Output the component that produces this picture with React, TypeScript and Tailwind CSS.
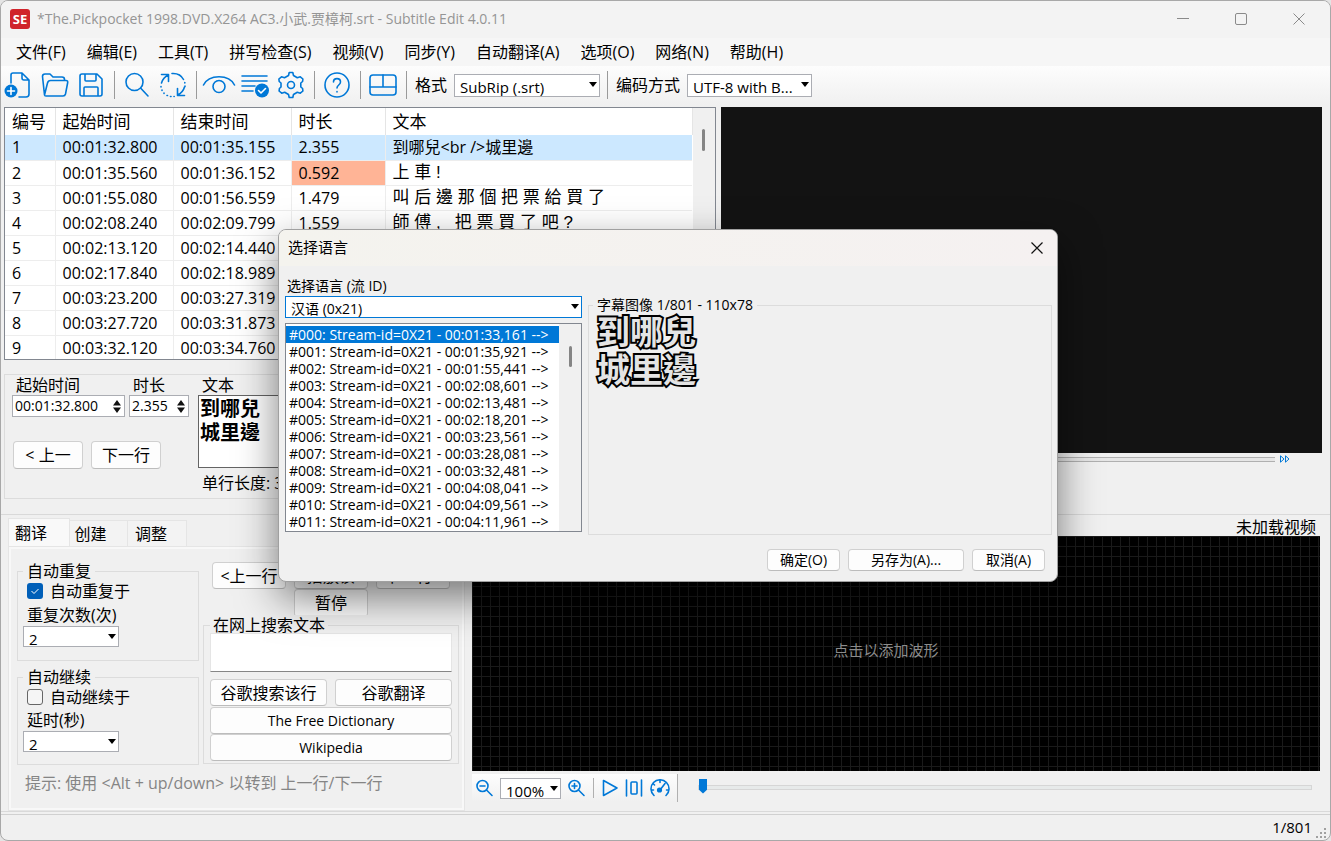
import type { ReactNode } from "react";

const menus = [
  "文件(F)",
  "编辑(E)",
  "工具(T)",
  "拼写检查(S)",
  "视频(V)",
  "同步(Y)",
  "自动翻译(A)",
  "选项(O)",
  "网络(N)",
  "帮助(H)",
];

const lines = [
  { start: "00:01:32.800", end: "00:01:35.155", duration: "2.355", text: "到哪兒<br />城里邊" },
  { start: "00:01:35.560", end: "00:01:36.152", duration: "0.592", text: "上 車 !" },
  { start: "00:01:55.080", end: "00:01:56.559", duration: "1.479", text: "叫 后 邊 那 個 把 票 給 買 了" },
  { start: "00:02:08.240", end: "00:02:09.799", duration: "1.559", text: "師 傅 ,   把 票 買 了 吧 ?" },
  { start: "00:02:13.120", end: "00:02:14.440", duration: "1.320", text: "" },
  { start: "00:02:17.840", end: "00:02:18.989", duration: "1.149", text: "" },
  { start: "00:03:23.200", end: "00:03:27.319", duration: "4.119", text: "" },
  { start: "00:03:27.720", end: "00:03:31.873", duration: "4.153", text: "" },
  { start: "00:03:32.120", end: "00:03:34.760", duration: "2.640", text: "" },
];

const streams = [
  "00:01:33,161",
  "00:01:35,921",
  "00:01:55,441",
  "00:02:08,601",
  "00:02:13,481",
  "00:02:18,201",
  "00:03:23,561",
  "00:03:28,081",
  "00:03:32,481",
  "00:04:08,041",
  "00:04:09,561",
  "00:04:11,961",
];

function Icon({ children, w = 28, h = 28 }: { children: ReactNode; w?: number; h?: number }) {
  return (
    <svg
      width={w}
      height={h}
      viewBox={`0 0 ${w} ${h}`}
      fill="none"
      stroke="#0078d7"
      strokeWidth="1.6"
      strokeLinecap="round"
      strokeLinejoin="round"
      className="shrink-0"
    >
      {children}
    </svg>
  );
}

function ToolButton({ label, children }: { label: string; children: ReactNode }) {
  return (
    <button aria-label={label} className="flex w-9 shrink-0 items-center justify-center">
      {children}
    </button>
  );
}

function Separator() {
  return (
    <div className="flex w-2.5 shrink-0 justify-center">
      <div className="h-7 w-px bg-[#9a9a9a]" />
    </div>
  );
}

type ComboProps = {
  id: string;
  value: string;
  label?: string;
  className?: string;
  selectClass?: string;
};

function Combo({ id, value, label, className = "", selectClass = "border-[#abadb3] text-base" }: ComboProps) {
  return (
    <div className={`relative shrink-0 ${className}`}>
      <select
        id={id}
        aria-label={label}
        className={`block w-full appearance-none border bg-white pl-[5px] pt-0.5 ${selectClass}`}
      >
        <option>{value}</option>
      </select>
      <svg width="8" height="5" viewBox="0 0 8 5" className="pointer-events-none absolute right-[3px] top-2">
        <path d="M0 0h8L4 5z" fill="#000" />
      </svg>
    </div>
  );
}

function Spinner({ id, value, className }: { id: string; value: string; className: string }) {
  return (
    <div className={`flex h-[22px] items-center border border-[#abadb3] bg-white ${className}`}>
      <input id={id} defaultValue={value} className="w-full min-w-0 pl-0.5 text-sm leading-5 outline-none" />
      <svg width="8" height="13" viewBox="0 0 8 13" className="mr-[3px] shrink-0">
        <path d="M0 5.5 4 0l4 5.5zM0 7.5 4 13l4-5.5z" fill="#111" />
      </svg>
    </div>
  );
}

function Button({ children, className = "" }: { children: ReactNode; className?: string }) {
  return (
    <button
      className={`flex items-center justify-center whitespace-nowrap rounded border border-[#d0d0d0] border-b-[#bcbcbc] bg-[#fdfdfd] ${className}`}
    >
      {children}
    </button>
  );
}

function TitleBar() {
  return (
    <header className="flex h-[37px] items-center bg-[#f3f3f3] pb-0.5 pl-[9px] pr-0.5">
      <div className="flex h-5 w-5 items-center justify-center rounded-[3px] bg-[#d0242b] text-[13px] font-bold leading-5 text-white">
        SE
      </div>
      <h1 className="ml-[7px] flex-1 text-sm text-[#959595]">
        *The.Pickpocket 1998.DVD.X264 AC3.小武.贾樟柯.srt - Subtitle Edit 4.0.11
      </h1>
      <button aria-label="最小化" className="flex w-[58px] justify-center">
        <svg width="12" height="12" stroke="#8a8a8a">
          <path d="M0 5.5h12" />
        </svg>
      </button>
      <button aria-label="最大化" className="flex w-[58px] justify-center">
        <svg width="12" height="12" stroke="#8a8a8a" fill="none">
          <rect x=".5" y=".5" width="11" height="11" rx="1.5" />
        </svg>
      </button>
      <button aria-label="关闭" className="flex w-[58px] justify-center">
        <svg width="12" height="12" stroke="#8a8a8a">
          <path d="M.5.5l11 11M11.5.5l-11 11" />
        </svg>
      </button>
    </header>
  );
}

function Toolbar() {
  return (
    <div className="flex h-[39px] items-center bg-linear-to-b from-[#fdfdfd] to-[#f0f0f0] pb-px">
      <ToolButton label="新建">
        <Icon w={32}>
          <path d="M8 12V4a2 2 0 0 1 2-2h9l7 7v14a3 3 0 0 1-3 3h-7M19 2v5a2 2 0 0 0 2 2h5" />
          <circle cx="8" cy="20" r="6.5" fill="#0078d7" stroke="none" />
          <path d="M8 16.500v7M4.500 20h7" stroke="#fff" />
        </Icon>
      </ToolButton>
      <ToolButton label="打开">
        <Icon>
          <path d="M3.500 24 1.500 5.500Q1.500 3 4 3h5l3 3h9q2.500 0 2.500 2.500v1M3.500 24l3-12q.6-2.500 3-2.500H25q2 0 1.700 2L24.500 23q-.5 2-2.500 2H5q-1.500 0-1.500-1z" />
        </Icon>
      </ToolButton>
      <ToolButton label="保存">
        <Icon>
          <path d="M5 3h15l5 5v15a2 2 0 0 1-2 2H5a2 2 0 0 1-2-2V5a2 2 0 0 1 2-2zM8 3v6a1 1 0 0 0 1 1h9a1 1 0 0 0 1-1V3M7 25v-8a1 1 0 0 1 1-1h12a1 1 0 0 1 1 1v8" />
        </Icon>
      </ToolButton>
      <Separator />
      <ToolButton label="查找">
        <Icon>
          <circle cx="11.500" cy="11" r="8.500" />
          <path d="m18 17.500 7 7.500" />
        </Icon>
      </ToolButton>
      <ToolButton label="替换">
        <Icon>
          <path d="M2.500 3.500h7v7M9.500 4Q4 6.500 2.500 12M25.500 24.500h-7v-7M18.500 24q5.500-2.500 7-8" />
          <path d="M13 2.500c6-.4 9.500 2 11.500 6" />
          <path d="M25.800 11.500v.5M26 15v.5M2 15.500v.5M3 19v.5M5 22v.5M8 24.500h.5M11.500 25.500h.5M15 25.500h.2" />
        </Icon>
      </ToolButton>
      <Separator />
      <ToolButton label="可视同步">
        <Icon w={34}>
          <path d="M1.500 14C7 3 27 3 32.500 14" />
          <circle cx="17" cy="15.500" r="6" />
        </Icon>
      </ToolButton>
      <ToolButton label="拼写检查">
        <Icon>
          <path d="M1 5h25M1 10h25M1 15h13M1 20h11" />
          <circle cx="21" cy="19.500" r="7" fill="#0078d7" stroke="none" />
          <path d="m17.500 19.500 2.500 2.500 4.500-4.500" stroke="#fff" />
        </Icon>
      </ToolButton>
      <ToolButton label="设置">
        <Icon>
          <path d="M11.500 4.500 12.200 1.500h3.600l.7 3 3.800 2.200 3-.9 2.600 2.200-.3 2.500-1.800 1.500v4l1.800 1.500.3 2.500-2.600 2.200-3-.9-3.800 2.200-.7 3h-3.600l-.7-3-3.800-2.200-3 .9-2.600-2.200.3-2.500L4 16v-4L2.200 10.500l-.3-2.500 2.600-2.200 3 .9z" />
          <circle cx="14" cy="14" r="3.500" />
        </Icon>
      </ToolButton>
      <Separator />
      <ToolButton label="帮助">
        <Icon>
          <circle cx="14" cy="14" r="12" />
          <path d="M10.500 11c0-4.500 7-4.500 7 0 0 3-3.500 3-3.500 6M14 20.500v.5" />
        </Icon>
      </ToolButton>
      <Separator />
      <ToolButton label="布局">
        <Icon>
          <rect x="1" y="4" width="26" height="20" rx="3" />
          <path d="M1 16h26M14 4v12" />
        </Icon>
      </ToolButton>
      <Separator />
      <label htmlFor="format" className="whitespace-nowrap pl-1 pr-[7px]">
        格式
      </label>
      <Combo
        id="format"
        value="SubRip (.srt)"
        className="mr-0.5 w-[146px]"
        selectClass="h-[23px] border-[#abadb3] text-[15px] leading-5"
      />
      <Separator />
      <label htmlFor="encoding" className="whitespace-nowrap pl-1 pr-[7px]">
        编码方式
      </label>
      <Combo
        id="encoding"
        value="UTF-8 with B..."
        className="w-[125px]"
        selectClass="h-[23px] border-[#abadb3] text-[15px] leading-5"
      />
    </div>
  );
}

function SubtitleList() {
  return (
    <div className="flex h-[253px] overflow-hidden border border-[#828790] bg-white">
      <div className="min-w-0 flex-1">
        <table className="w-full table-fixed border-collapse text-left">
          <thead>
            <tr className="h-[27px] text-[17px] leading-6">
              <th className="w-[50px] border-r border-[#e5e5e5] p-0 pl-[7px] font-normal">编号</th>
              <th className="w-[118px] border-r border-[#e5e5e5] p-0 pl-[7px] font-normal">起始时间</th>
              <th className="w-[118px] border-r border-[#e5e5e5] p-0 pl-[7px] font-normal">结束时间</th>
              <th className="w-[94px] border-r border-[#e5e5e5] p-0 pl-[7px] font-normal">时长</th>
              <th className="border-r border-[#e5e5e5] p-0 pl-[7px] font-normal">文本</th>
            </tr>
          </thead>
          <tbody>
            {lines.map((line, i) => (
              <tr
                key={line.start}
                className={`h-[25px] border-b border-[#ededed] leading-6 ${i === 0 ? "bg-[#cce8ff]" : ""}`}
              >
                <td className="border-r border-[#ededed] p-0 pl-[7px]">{i + 1}</td>
                <td className="border-r border-[#ededed] p-0 pl-[7px]">{line.start}</td>
                <td className="border-r border-[#ededed] p-0 pl-[7px]">{line.end}</td>
                <td className={`border-r border-[#ededed] p-0 pl-[7px] ${i === 1 ? "bg-[#ffb496]" : ""}`}>
                  {line.duration}
                </td>
                <td
                  className={`whitespace-pre p-0 pl-[7px] ${
                    i === 0 ? "" : "font-['Liberation_Sans','Noto_Sans_CJK_TC',sans-serif] text-[17px]"
                  }`}
                >
                  {line.text}
                </td>
              </tr>
            ))}
          </tbody>
        </table>
      </div>
      <div className="flex w-[22px] justify-center bg-[#f0f0f0] pt-[21px]">
        <div className="h-[22px] w-[3px] rounded bg-[#858585]" />
      </div>
    </div>
  );
}

function EditPanel() {
  return (
    <section className="mt-3.5 flex h-[125px] gap-2 border border-[#dcdcdc] pl-[7px]">
      <div className="w-[178px] shrink-0">
        <div className="flex gap-1">
          <div className="w-[113px]">
            <label htmlFor="start" className="block pl-1 leading-5">
              起始时间
            </label>
            <Spinner id="start" value="00:01:32.800" className="w-full" />
          </div>
          <div className="w-[60px]">
            <label htmlFor="duration" className="block pl-1 leading-5">
              时长
            </label>
            <Spinner id="duration" value="2.355" className="w-full" />
          </div>
        </div>
        <div className="mt-6 flex gap-2 pl-px">
          <Button className="h-7 w-[70px]">&lt; 上一</Button>
          <Button className="h-7 w-[70px]">下一行</Button>
        </div>
      </div>
      <div className="min-w-0 flex-1 pr-2">
        <label htmlFor="text" className="block pl-1 leading-5">
          文本
        </label>
        <textarea
          id="text"
          defaultValue={"到哪兒\n城里邊"}
          className="block h-[73px] w-full resize-none border border-[#646464] bg-white px-px font-['Noto_Sans_CJK_TC',sans-serif] text-[20px] font-bold leading-6"
        />
        <p className="mt-[3px] pl-1 leading-6">单行长度: 3/3</p>
      </div>
    </section>
  );
}

function VideoPane() {
  return (
    <section>
      <div className="h-[346px] bg-[#131313]" />
      <div className="mt-0.5 flex items-center gap-[5px] pr-8">
        <div className="h-[5px] flex-1 border-y border-[#b0b0b0] bg-[#e6e6e6]" />
        <svg width="10" height="8" viewBox="0 0 10 8" fill="none" stroke="#0078d7">
          <path d="M.5.8v6.400L4 4zM5.500.8v6.400L9 4z" />
        </svg>
      </div>
    </section>
  );
}

function TranslateTab() {
  return (
    <section className="flex w-[457px] shrink-0 flex-col pt-[3px]">
      <div role="tablist" className="flex items-end">
        <button role="tab" className="h-7 w-[62px] border border-b-0 border-[#e5e5e5] bg-[#f9f9f9] pr-4">
          翻译
        </button>
        <button role="tab" className="h-[26px] w-[58px] border border-b-0 border-l-0 border-[#e5e5e5] bg-[#f3f3f3] pr-4">
          创建
        </button>
        <button role="tab" className="h-[26px] w-[59px] border border-b-0 border-l-0 border-[#e5e5e5] bg-[#f3f3f3] pr-3">
          调整
        </button>
      </div>
      <div className="flex flex-1 flex-col border-[3px] border-[#f8f8f8] outline -outline-offset-1 outline-[#e5e5e5]">
        <div className="flex gap-1 pl-1.5">
          <div className="w-[182px]">
            <fieldset className="mt-3 h-[100px] border border-[#dcdcdc] px-[5px]">
              <legend className="px-1 leading-5">自动重复</legend>
              <div className="flex items-center gap-[7px] pl-1 leading-5">
                <span className="relative flex">
                  <input
                    id="repeat"
                    type="checkbox"
                    defaultChecked
                    className="h-4 w-4 appearance-none rounded-[3px] bg-[#005fb8]"
                  />
                  <svg
                    width="16"
                    height="16"
                    fill="none"
                    stroke="#fff"
                    className="pointer-events-none absolute inset-0"
                  >
                    <path d="m4.500 8 2.500 2.500 4.500-4.500" />
                  </svg>
                </span>
                <label htmlFor="repeat">自动重复于</label>
              </div>
              <label htmlFor="times" className="mt-[3px] block pl-1 leading-[22px]">
                重复次数(次)
              </label>
              <Combo
                id="times"
                value="2"
                className="w-24"
                selectClass="h-[21px] border-[#abadb3] text-[15px] leading-5"
              />
            </fieldset>
            <fieldset className="mt-1.5 h-[98px] border border-[#dcdcdc] px-[5px]">
              <legend className="px-1 leading-5">自动继续</legend>
              <div className="flex items-center gap-[7px] pl-1 leading-5">
                <input
                  id="continue"
                  type="checkbox"
                  className="h-4 w-4 appearance-none rounded-[3px] border border-[#666] bg-[#f5f5f5]"
                />
                <label htmlFor="continue">自动继续于</label>
              </div>
              <label htmlFor="delay" className="mt-0.5 block pl-1 leading-[22px]">
                延时(秒)
              </label>
              <Combo
                id="delay"
                value="2"
                className="w-24"
                selectClass="h-[21px] border-[#abadb3] text-[15px] leading-5"
              />
            </fieldset>
          </div>
          <div className="w-[256px]">
            <div className="mt-[13px] grid h-[53px] grid-cols-[74px_74px_74px] gap-x-2 overflow-hidden pl-[9px]">
              <Button className="h-[27px]">&lt;上一行</Button>
              <Button className="h-[27px]">播放该</Button>
              <Button className="h-[27px]">下一行&gt;</Button>
              <Button className="col-start-2 h-7">暂停</Button>
            </div>
            <fieldset className="h-[149px] border border-[#dcdcdc] px-1.5">
              <legend className="px-[3px] leading-5">
                <label htmlFor="query">在网上搜索文本</label>
              </legend>
              <textarea
                id="query"
                className="-mt-0.5 block h-[39px] w-full resize-none border border-[#e5e5e5] border-b-[#868686] bg-white"
              />
              <div className="mt-[7px] grid grid-cols-2 gap-x-2">
                <Button className="h-[27px]">谷歌搜索该行</Button>
                <Button className="h-[27px]">谷歌翻译</Button>
                <Button className="col-span-2 mt-px h-[27px] text-sm">The Free Dictionary</Button>
                <Button className="col-span-2 h-[27px] text-sm">Wikipedia</Button>
              </div>
            </fieldset>
          </div>
        </div>
        <p className="mt-1.5 pl-3.5 leading-6 text-[#858585]">提示: 使用 &lt;Alt + up/down&gt; 以转到 上一行/下一行</p>
      </div>
    </section>
  );
}

function Waveform() {
  return (
    <section className="flex min-w-0 flex-1 flex-col pr-2.5">
      <div className="h-[21px] pr-1 text-right leading-6">未加载视频</div>
      <div className="flex flex-1 items-center justify-center bg-black bg-[linear-gradient(to_right,#1a1a1a_1px,transparent_1px),linear-gradient(to_bottom,#1a1a1a_1px,transparent_1px)] bg-size-[9px_10px] pb-1.5 pr-5 text-[15px] text-[#8c8c8c]">
        点击以添加波形
      </div>
      <div className="flex h-10 items-start pt-[3px]">
        <div className="flex h-7 items-center border-r border-[#b0b0b0] bg-linear-to-b from-[#fdfdfd] to-[#f0f0f0] pl-1">
          <button aria-label="缩小">
            <Icon w={18} h={18}>
              <circle cx="6.500" cy="7" r="5.500" />
              <path d="m10.500 11 5.500 5.500M4 7h5" />
            </Icon>
          </button>
          <Combo
            id="zoom"
            label="缩放"
            value="100%"
            className="mx-1.5 w-[61px]"
            selectClass="h-[21px] border-[#abadb3] text-[15px] leading-5"
          />
          <button aria-label="放大" className="ml-px">
            <Icon w={18} h={18}>
              <circle cx="6.500" cy="7" r="5.500" />
              <path d="m10.500 11 5.500 5.500M4 7h5M6.500 4.500v5" />
            </Icon>
          </button>
          <div className="mx-[7px] h-5 w-px bg-[#b0b0b0]" />
          <button aria-label="播放">
            <Icon w={18} h={18}>
              <path d="M2.500 1.500v15L16 9z" />
            </Icon>
          </button>
          <button aria-label="居中" className="ml-1.5">
            <Icon w={18} h={18}>
              <path d="M1.500 1v16M16.500 1v16" />
              <rect x="6" y="3" width="6" height="12" rx="1" />
            </Icon>
          </button>
          <button aria-label="播放速度" className="mx-[7px]">
            <Icon w={20} h={18}>
              <path d="M4 16.500a9 9 0 1 1 12 0M10 1.500v2M3 4.500l1.500 1.500M1.500 11h2M18.500 11h-2M10 11l5-6.500" />
              <circle cx="9.500" cy="11" r="1.800" fill="#0078d7" />
            </Icon>
          </button>
        </div>
        <input
          type="range"
          aria-label="位置"
          defaultValue={0}
          className="ml-5 mr-2 mt-1 h-[18px] min-w-0 flex-1 appearance-none [&::-webkit-slider-runnable-track]:h-[5px] [&::-webkit-slider-runnable-track]:border [&::-webkit-slider-runnable-track]:border-[#d6d6d6] [&::-webkit-slider-runnable-track]:bg-[#e7eaea] [&::-webkit-slider-thumb]:-mt-[7px] [&::-webkit-slider-thumb]:h-[15px] [&::-webkit-slider-thumb]:w-2 [&::-webkit-slider-thumb]:appearance-none [&::-webkit-slider-thumb]:bg-[#0078d7] [&::-webkit-slider-thumb]:[clip-path:polygon(0_0,100%_0,100%_75%,50%_100%,0_75%)]"
        />
      </div>
    </section>
  );
}

function LanguageDialog() {
  return (
    <div
      role="dialog"
      aria-labelledby="dialog-title"
      className="absolute left-[277px] top-[228px] w-[780px] overflow-hidden rounded-lg border border-[#a0a0a0] bg-[#f0f0f0] text-sm shadow-[0_16px_40px_rgba(0,0,0,0.5)]"
    >
      <div className="flex h-9 items-center justify-between bg-linear-to-r from-[#f4f3ee] to-[#f5f1f1] pl-[9px] pr-3.5">
        <h2 id="dialog-title" className="text-[15px]">
          选择语言
        </h2>
        <button aria-label="关闭">
          <svg width="12" height="12" stroke="#111" strokeWidth="1.200">
            <path d="M.5.5l11 11M11.500.5l-11 11" />
          </svg>
        </button>
      </div>
      <div className="flex gap-1.5 pl-1.5 pr-[5px]">
        <div className="w-[297px] shrink-0 pt-2.5">
          <label htmlFor="language" className="block pl-0.5 leading-5">
            选择语言 (流 ID)
          </label>
          <Combo
            id="language"
            value="汉语 (0x21)"
            className="w-full"
            selectClass="h-[22px] border-[#0078d7] text-sm leading-5"
          />
          <div className="mt-[5px] flex h-[209px] border border-[#828790] bg-white">
            <ul className="flex-1 overflow-hidden whitespace-nowrap pt-0.5">
              {streams.map((time, i) => (
                <li key={time} className={`pl-[3px] leading-[17px] ${i === 0 ? "bg-[#0078d7] text-white" : ""}`}>
                  #{String(i).padStart(3, "0")}: Stream-id=0X21 - {time} --&gt;
                </li>
              ))}
            </ul>
            <div className="flex w-[22px] justify-center bg-[#f0f0f0] pt-[22px]">
              <div className="h-[21px] w-[3px] rounded bg-[#858585]" />
            </div>
          </div>
        </div>
        <fieldset className="mt-[29px] h-[240px] min-w-0 flex-1 border border-[#dcdcdc] pl-2">
          <legend className="-ml-1 px-1 leading-5">字幕图像 1/801 - 110x78</legend>
          <p className="-mt-1 font-['Noto_Sans_CJK_TC',sans-serif] text-[33px] font-bold leading-[38px] text-[#e4e4e4] [-webkit-text-stroke:4px_#000] [paint-order:stroke_fill]">
            到哪兒
            <br />
            城里邊
          </p>
        </fieldset>
      </div>
      <div className="flex justify-end gap-2 pb-2.5 pr-3 pt-3.5">
        <Button className="h-[22px] w-[73px]">确定(O)</Button>
        <Button className="h-[22px] w-[116px]">另存为(A)...</Button>
        <Button className="h-[22px] w-[73px]">取消(A)</Button>
      </div>
    </div>
  );
}

function App() {
  return (
    <div className="bg-[#e4e4e4] font-['Open_Sans','Noto_Sans_CJK_SC',sans-serif] text-base text-black">
      <div className="relative flex min-h-screen flex-col overflow-hidden rounded-lg border border-[#a8a8a8] bg-[#f0f0f0]">
        <TitleBar />
        <nav className="flex h-7 items-center gap-[21px] bg-[#f6f6f6] pl-[15px]">
          {menus.map((menu) => (
            <button key={menu} className="whitespace-nowrap">
              {menu}
            </button>
          ))}
        </nav>
        <Toolbar />
        <div className="grid grid-cols-[711fr_601fr] gap-[5px] pb-[15px] pl-[3px] pr-2 pt-0.5">
          <div className="min-w-0">
            <SubtitleList />
            <EditPanel />
          </div>
          <VideoPane />
        </div>
        <main className="flex flex-1 gap-[7px] border-y border-[#d9d9d9] pl-[7px]">
          <TranslateTab />
          <Waveform />
        </main>
        <footer className="mt-0.5 flex h-[26px] items-center justify-end gap-1 border-t border-[#d0d0d0] pr-0.5 text-[15px]">
          <span>1/801</span>
          <svg width="12" height="12" fill="#a0a0a0" className="self-end">
            <path d="M8 0h2v2H8zM8 4h2v2H8zM8 8h2v2H8zM4 4h2v2H4zM4 8h2v2H4zM0 8h2v2H0z" />
          </svg>
        </footer>
        <LanguageDialog />
      </div>
    </div>
  );
}

export default App;
